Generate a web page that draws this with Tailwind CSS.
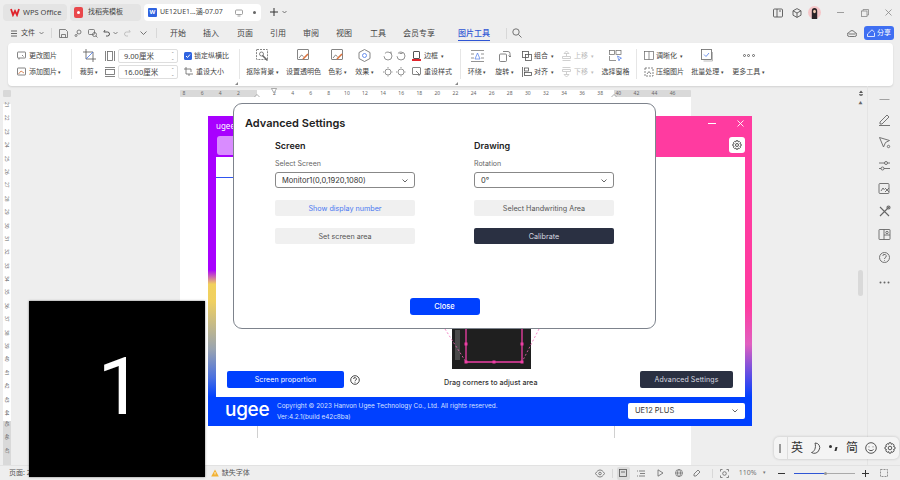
<!DOCTYPE html>
<html lang="zh-CN">
<head>
  <meta charset="UTF-8">
  <title>UE12 - WPS</title>
  <script src="https://cdn.jsdelivr.net/npm/@tailwindcss/browser@4"></script>
</head>
<body class="m-0">
<div class="relative w-[900px] h-[480px] overflow-hidden bg-[#eeeeee] flex flex-col text-[#444] font-['Noto_Sans','Noto_Sans_CJK_SC',sans-serif]">

  <!-- tabs -->
  <div class="h-[25px] pt-[4px] flex items-start shrink-0 text-[7.5px]">
    <div class="ml-[3px] w-[64px] h-[17px] rounded-[4px] bg-[#e4e4e4] flex items-center pl-[7px] gap-[3px]">
      <svg class="w-[10px] h-[9px]" viewBox="0 0 10 9" fill="none" stroke="#e0242c" stroke-width="1.8"><path d="M1 1l2 6 2-4 2 4 2-6"/></svg>
      <span>WPS Office</span>
    </div>
    <div class="ml-[3px] w-[71px] h-[17px] rounded-[4px] bg-[#e4e4e4] flex items-center pl-[4px] gap-[5px]">
      <span class="w-[9px] h-[11px] rounded-[2px] bg-[#e9474b] flex items-center justify-center"><span class="w-[3px] h-[3px] rounded-full bg-white"></span></span>
      <span class="text-[7px]">找稻壳模板</span>
    </div>
    <div class="ml-[3px] w-[117px] h-[17px] rounded-[4px] bg-white flex items-center pl-[4px]">
      <span class="w-[9px] h-[9px] rounded-[1px] bg-[#2f63e0] text-white text-[6px] leading-[9px] text-center font-bold">W</span>
      <span class="ml-[3px] text-[7px]">UE12UE1...涵-07.07</span>
      <svg class="ml-[12px] w-[8px] h-[8px]" viewBox="0 0 8 8" fill="none" stroke="#888" stroke-width=".8"><rect x=".5" y="1" width="7" height="4.5" rx="1"/><path d="M2.500 7h3"/></svg>
      <span class="ml-[10px] w-[3px] h-[3px] rounded-full bg-[#666]"></span>
    </div>
    <svg class="ml-[8px] mt-[3px] w-[10px] h-[10px]" viewBox="0 0 10 10" stroke="#333" stroke-width="1"><path d="M5 1v8M1 5h8"/></svg>
    <svg class="ml-[3px] mt-[6px] w-[5px] h-[4px]" viewBox="0 0 5 4" fill="none" stroke="#555" stroke-width=".8"><path d="M.5 1l2 2 2-2"/></svg>
    <div class="ml-auto flex items-center h-[17px]">
      <svg class="w-[10px] h-[10px]" viewBox="0 0 10 10" fill="none" stroke="#555" stroke-width=".9"><rect x=".5" y="1" width="9" height="8" rx="1"/><path d="M4 1v8M6 3h2"/></svg>
      <svg class="ml-[9px] w-[10px] h-[10px]" viewBox="0 0 10 10" fill="none" stroke="#555" stroke-width=".9"><path d="M5 .6l4 2.200v4.400l-4 2.200-4-2.200V2.800zM1 2.800l4 2.200 4-2.200M5 5v4.400"/></svg>
      <svg class="ml-[6px] w-[13px] h-[13px]" viewBox="0 0 13 13"><circle cx="6.500" cy="6.500" r="6.500" fill="#f5c6c8"/><path d="M3.800 13V5a2.700 3 0 015.400 0v8z" fill="#2a2226"/><ellipse cx="6.500" cy="5.500" rx="1.400" ry="1.800" fill="#f0c8b0"/></svg>
      <svg class="ml-[16px] w-[7px] h-[7px]" viewBox="0 0 7 7" stroke="#888" stroke-width=".8"><path d="M0 3.500h7"/></svg>
      <svg class="ml-[17px] w-[8px] h-[8px]" viewBox="0 0 8 8" fill="none" stroke="#888" stroke-width=".8"><rect x=".5" y="2" width="5.500" height="5.500"/><path d="M2 2V.5h5.500V6H6"/></svg>
      <svg class="ml-[16px] mr-[8px] w-[7px] h-[7px]" viewBox="0 0 7 7" stroke="#888" stroke-width=".8"><path d="M.5.5l6 6M6.500.5l-6 6"/></svg>
    </div>
  </div>

  <!-- menu row -->
  <div class="h-[16px] mb-[2px] flex items-center shrink-0 text-[7.5px]">
    <svg class="ml-[11px] w-[6px] h-[7px]" viewBox="0 0 6 7" stroke="#444" stroke-width=".8"><path d="M0 1h6M0 3.500h6M0 6h6"/></svg>
    <span class="ml-[4px] text-[7px]">文件</span>
    <svg class="ml-[4px] w-[5px] h-[4px]" viewBox="0 0 5 4" fill="none" stroke="#555" stroke-width=".7"><path d="M.5 1l2 2 2-2"/></svg>
    <span class="ml-[7px] w-px h-[10px] bg-[#d8d8d8]"></span>
    <svg class="ml-[7px] w-[9px] h-[9px]" viewBox="0 0 9 9" fill="none" stroke="#666" stroke-width=".8"><path d="M.5.5h6l2 2v6h-8zM2.500 8.500v-3h4v3"/></svg>
    <svg class="ml-[6px] w-[8px] h-[8px]" viewBox="0 0 8 8" fill="none" stroke="#666" stroke-width=".8"><circle cx="5" cy="3" r="2"/><circle cx="2" cy="6.500" r="1"/><path d="M3.500 4.500L2.800 5.500"/></svg>
    <svg class="ml-[6px] w-[10px] h-[9px]" viewBox="0 0 10 9" fill="none" stroke="#666" stroke-width=".8"><rect x=".5" y=".5" width="6" height="5" rx="1"/><circle cx="6.500" cy="5.500" r="2"/><path d="M8 7l1.500 1.500"/></svg>
    <svg class="ml-[5px] w-[8px] h-[8px]" viewBox="0 0 8 8" fill="none" stroke="#444" stroke-width=".9"><path d="M2 1L.8 3h3.700a2 2 0 010 4H3"/></svg>
    <svg class="ml-[2px] w-[5px] h-[4px]" viewBox="0 0 5 4" fill="none" stroke="#555" stroke-width=".7"><path d="M.5 1l2 2 2-2"/></svg>
    <svg class="ml-[5px] w-[8px] h-[8px]" viewBox="0 0 8 8" fill="none" stroke="#bbb" stroke-width=".9"><path d="M6 1l1.200 2H3.500a2 2 0 000 4H5"/></svg>
    <svg class="ml-[9px] w-[7px] h-[4px]" viewBox="0 0 7 4" fill="none" stroke="#555" stroke-width=".8"><path d="M.5.5l3 3 3-3"/></svg>
    <span class="ml-[9px] w-px h-[10px] bg-[#d8d8d8]"></span>
    <span class="ml-[13px] w-[16px] whitespace-nowrap text-[8px]">开始</span>
    <span class="ml-[17px] w-[16px] whitespace-nowrap text-[8px]">插入</span>
    <span class="ml-[18px] w-[16px] whitespace-nowrap text-[8px]">页面</span>
    <span class="ml-[17px] w-[16px] whitespace-nowrap text-[8px]">引用</span>
    <span class="ml-[17px] w-[16px] whitespace-nowrap text-[8px]">审阅</span>
    <span class="ml-[17px] w-[16px] whitespace-nowrap text-[8px]">视图</span>
    <span class="ml-[18px] w-[16px] whitespace-nowrap text-[8px]">工具</span>
    <span class="ml-[17px] w-[32px] whitespace-nowrap text-[8px]">会员专享</span>
    <span class="ml-[23px] w-[32px] h-[15px] leading-[14px] whitespace-nowrap text-[8px] text-[#2f55d4] font-medium border-b border-[#2f55d4]">图片工具</span>
    <span class="ml-[16px] mr-[5px] w-px h-[11px] bg-[#d8d8d8]"></span>
    <svg class="w-[10px] h-[10px]" viewBox="0 0 10 10" fill="none" stroke="#666" stroke-width=".9"><circle cx="4" cy="4" r="3.200"/><path d="M6.500 6.500l3 3"/></svg>
    <svg class="ml-auto w-[10px] h-[8px]" viewBox="0 0 10 8" fill="none" stroke="#555" stroke-width=".8"><path d="M2.500 7.500a2 2 0 01-.3-4 3 3 0 015.600 0 2 2 0 01-.3 4zM1.500 5h7"/></svg>
    <span class="ml-[7px] mr-[6px] w-[30px] h-[14px] rounded-[3px] bg-[#3f6ff2] text-white text-[7px] flex items-center justify-center gap-[2px]">
      <svg class="w-[8px] h-[8px]" viewBox="0 0 8 8" fill="none" stroke="#fff" stroke-width=".8"><path d="M.5 7.500h7V4M.5 7.500V5L5 .8l2.500 2.400"/></svg>分享
    </span>
  </div>

  <!-- ribbon -->
  <div class="relative ml-[8px] w-[885px] h-[43px] pb-[2px] rounded-[4px] bg-white shadow-[0_1px_2px_rgba(0,0,0,0.12)] flex items-center shrink-0 text-[7px] leading-[14px] whitespace-nowrap">
    <div class="ml-[9px] w-[47px] flex flex-col gap-[2px]">
      <div class="h-[14px] flex items-center gap-[3px]"><svg class="w-[9px] h-[9px]" viewBox="0 0 9 9" fill="none" stroke="#666" stroke-width=".8"><rect x=".5" y="1" width="8" height="6" rx=".5"/><path d="M2 7v1.500M5 4l1.500 1.500"/></svg>更改图片</div>
      <div class="h-[14px] flex items-center gap-[3px]"><svg class="w-[9px] h-[9px]" viewBox="0 0 9 9" fill="none" stroke="#666" stroke-width=".8"><rect x=".5" y="1" width="8" height="7" rx=".5"/><path d="M1.500 7l2.500-3 3 2" stroke="#d0703a"/></svg>添加图片 <span class="text-[5px] -ml-[2px]">▾</span></div>
    </div>
    <span class="ml-[7px] w-px h-[30px] bg-[#e6e6e6]"></span>
    <div class="ml-[7px] w-[20px] flex flex-col gap-[2px] items-center">
      <div class="h-[14px] flex items-center"><svg class="w-[13px] h-[13px]" viewBox="0 0 13 13" fill="none" stroke="#555" stroke-width=".8"><path d="M3 0v10h10M0 3h10v10"/><path d="M3 10L10 3" stroke="#4a78e8"/></svg></div>
      <div class="h-[14px]">裁剪<span class="text-[5px]"> ▾</span></div>
    </div>
    <div class="ml-[5px] w-[12px] flex flex-col gap-[2px] items-center">
      <div class="h-[14px] flex items-center"><svg class="w-[10px] h-[10px]" viewBox="0 0 10 10" fill="none" stroke="#666" stroke-width=".8"><path d="M.5 0v10M9.500 0v10"/><rect x="2.500" y=".5" width="5" height="9"/></svg></div>
      <div class="h-[14px] flex items-center"><svg class="w-[10px] h-[10px]" viewBox="0 0 10 10" fill="none" stroke="#666" stroke-width=".8"><path d="M0 .5h10M0 9.500h10"/><rect x=".5" y="2.500" width="9" height="5"/></svg></div>
    </div>
    <div class="ml-[2px] w-[60px] flex flex-col gap-[2px] text-[7.5px]">
      <div class="h-[14px] rounded-[2px] border border-[#dedede] flex items-center pl-[5px] pr-[3px] justify-between">9.00厘米<span class="text-[4px] leading-[5px] text-[#777] text-center">⌃<br>⌄</span></div>
      <div class="h-[14px] rounded-[2px] border border-[#dedede] flex items-center pl-[5px] pr-[3px] justify-between">16.00厘米<span class="text-[4px] leading-[5px] text-[#777] text-center">⌃<br>⌄</span></div>
    </div>
    <div class="ml-[6px] w-[46px] flex flex-col gap-[2px]">
      <div class="h-[14px] flex items-center gap-[2px]"><span class="w-[8px] h-[8px] rounded-[1.500px] bg-[#2f63e0] flex items-center justify-center"><svg class="w-[6px] h-[6px]" viewBox="0 0 6 6" fill="none" stroke="#fff" stroke-width="1"><path d="M1 3l1.500 1.500L5 1.500"/></svg></span>锁定纵横比</div>
      <div class="h-[14px] flex items-center gap-[3px]"><svg class="w-[9px] h-[9px]" viewBox="0 0 9 9" fill="none" stroke="#666" stroke-width=".8"><path d="M2 0v7h7M0 2h7v3M5 7v2"/></svg>重设大小</div>
    </div>
    <span class="ml-[9px] w-px h-[30px] bg-[#e6e6e6]"></span>
    <div class="ml-[6px] w-[33px] flex flex-col gap-[2px] items-center">
      <div class="h-[14px] flex items-center"><svg class="w-[13px] h-[13px]" viewBox="0 0 13 13" fill="none" stroke="#666" stroke-width=".8"><rect x=".5" y=".5" width="11" height="10" rx=".5" stroke-dasharray="2 1"/><circle cx="5.500" cy="5" r="2"/><path d="M6.500 6.500l5 5" stroke-width="1.600"/></svg></div>
      <div class="h-[14px]">抠除背景<span class="text-[5px]"> ▾</span></div>
    </div>
    <div class="ml-[7px] w-[35px] flex flex-col gap-[2px] items-center">
      <div class="h-[14px] flex items-center"><svg class="w-[13px] h-[13px]" viewBox="0 0 13 13" fill="none" stroke="#666" stroke-width=".8"><rect x=".5" y=".5" width="11" height="10" rx=".5"/><path d="M2 9l2.500-3 2 1.500"/><path d="M6 10l5-5" stroke="#d9713c" stroke-width="1.600"/></svg></div>
      <div class="h-[14px]">设置透明色</div>
    </div>
    <div class="ml-[7px] w-[19px] flex flex-col gap-[2px] items-center">
      <div class="h-[14px] flex items-center"><svg class="w-[13px] h-[13px]" viewBox="0 0 13 13" fill="none" stroke="#666" stroke-width=".8"><rect x=".5" y=".5" width="11" height="10" rx=".5"/><path d="M2 9l2.500-3 2 1.500"/><path d="M6 10l5-5" stroke="#d9713c" stroke-width="1.600"/></svg></div>
      <div class="h-[14px]">色彩<span class="text-[5px]"> ▾</span></div>
    </div>
    <div class="ml-[8px] w-[19px] flex flex-col gap-[2px] items-center">
      <div class="h-[14px] flex items-center"><svg class="w-[13px] h-[13px]" viewBox="0 0 13 13" fill="none" stroke="#666" stroke-width=".8"><path d="M6.500.5l5.500 3v6l-5.500 3-5.500-3v-6z"/><circle cx="6.500" cy="6.500" r="2" stroke="#4a78e8"/></svg></div>
      <div class="h-[14px]">效果<span class="text-[5px]"> ▾</span></div>
    </div>
    <div class="ml-[7px] w-[27px] grid grid-cols-2 gap-y-[2px] justify-items-center">
      <div class="h-[14px] flex items-center"><svg class="w-[10px] h-[10px]" viewBox="0 0 10 10" fill="none" stroke="#777" stroke-width=".8"><circle cx="5" cy="5" r="4" stroke-dasharray="12 3"/><path d="M8 .5v2"/></svg></div>
      <div class="h-[14px] flex items-center"><svg class="w-[10px] h-[10px]" viewBox="0 0 10 10" fill="none" stroke="#777" stroke-width=".8"><circle cx="5" cy="5" r="4" stroke-dasharray="12 3"/><path d="M3.500 2.500h3"/></svg></div>
      <div class="h-[14px] flex items-center"><svg class="w-[10px] h-[10px]" viewBox="0 0 10 10" fill="none" stroke="#777" stroke-width=".8"><circle cx="5" cy="5" r="3"/><path d="M5 0v1.500M5 8.500V10M0 5h1.500M8.500 5H10" stroke-dasharray="1 1"/></svg></div>
      <div class="h-[14px] flex items-center"><svg class="w-[10px] h-[10px]" viewBox="0 0 10 10" fill="none" stroke="#777" stroke-width=".8"><circle cx="5" cy="5" r="3"/><path d="M5 0v1.500M5 8.500V10M0 5h1.500M8.500 5H10" stroke-dasharray="1 1"/></svg></div>
    </div>
    <div class="ml-[4px] w-[41px] flex flex-col gap-[2px]">
      <div class="h-[14px] flex items-center gap-[3px]"><span class="w-[9px] h-[10px] flex flex-col"><span class="flex-1 border border-[#555] rounded-[1px] mx-[1px]"></span><span class="h-[2px] bg-[#e0242c]"></span></span>边框<span class="text-[5px]">▾</span></div>
      <div class="h-[14px] flex items-center gap-[3px]"><svg class="w-[9px] h-[9px]" viewBox="0 0 9 9" fill="none" stroke="#666" stroke-width=".8"><rect x=".5" y=".5" width="8" height="7" rx=".5"/><path d="M4 4l3 3v2"/></svg>重设样式</div>
    </div>
    <span class="ml-[7px] w-px h-[30px] bg-[#e6e6e6]"></span>
    <div class="ml-[6px] w-[20px] flex flex-col gap-[2px] items-center">
      <div class="h-[14px] flex items-center"><svg class="w-[13px] h-[12px]" viewBox="0 0 13 12" fill="none" stroke="#666" stroke-width=".7"><path d="M0 .5h13M0 11.500h13M0 4h3M0 8h3M10 4h3M10 8h3"/><path d="M4 9l2.500-6 2.500 6z" stroke="#4a78e8"/></svg></div>
      <div class="h-[14px]">环绕<span class="text-[5px]"> ▾</span></div>
    </div>
    <div class="ml-[8px] w-[19px] flex flex-col gap-[2px] items-center">
      <div class="h-[14px] flex items-center"><svg class="w-[12px] h-[13px]" viewBox="0 0 12 13" fill="none" stroke="#666" stroke-width=".8"><rect x=".5" y="5" width="7" height="7.500" rx="1"/><path d="M4 2.500h5a2 2 0 012 2V8M9.500 6.500L11 8l1-1.500"/></svg></div>
      <div class="h-[14px]">旋转<span class="text-[5px]"> ▾</span></div>
    </div>
    <div class="ml-[8px] w-[33px] flex flex-col gap-[2px]">
      <div class="h-[14px] flex items-center gap-[2px]"><svg class="w-[10px] h-[10px]" viewBox="0 0 10 10" fill="none" stroke="#555" stroke-width=".8"><rect x=".5" y=".5" width="6" height="6"/><rect x="3.500" y="3.500" width="6" height="6"/></svg>组合<span class="text-[5px] ml-[1px]">▾</span></div>
      <div class="h-[14px] flex items-center gap-[2px]"><svg class="w-[10px] h-[10px]" viewBox="0 0 10 10" fill="none" stroke="#555" stroke-width=".8"><path d="M.5 0v10"/><rect x="2.500" y="1" width="4" height="3"/><rect x="2.500" y="5.500" width="7" height="3"/></svg>对齐<span class="text-[5px] ml-[1px]">▾</span></div>
    </div>
    <div class="ml-[7px] w-[33px] flex flex-col gap-[2px] text-[#bcbcbc]">
      <div class="h-[14px] flex items-center gap-[3px]"><svg class="w-[9px] h-[10px]" viewBox="0 0 9 10" fill="none" stroke="#c4c4c4" stroke-width=".8"><path d="M4.500 0L2 2.500h5zM4.500 2.500V5M.5 5.500h8v2h-8zM.5 9.500h8"/></svg>上移<span class="text-[5px]">▾</span></div>
      <div class="h-[14px] flex items-center gap-[3px]"><svg class="w-[9px] h-[10px]" viewBox="0 0 9 10" fill="none" stroke="#c4c4c4" stroke-width=".8"><path d="M4.500 10L2 7.500h5zM4.500 7.500V5M.5 2.500h8v2h-8zM.5.500h8"/></svg>下移<span class="text-[5px]">▾</span></div>
    </div>
    <div class="ml-[6px] w-[29px] flex flex-col gap-[2px] items-center">
      <div class="h-[14px] flex items-center"><svg class="w-[13px] h-[12px]" viewBox="0 0 13 12" fill="none" stroke="#666" stroke-width=".7"><rect x=".5" y=".5" width="5" height="4"/><rect x="7" y=".5" width="5" height="4"/><path d="M.5 6v4.500H7"/><path d="M8.500 6l4 2.200-1.700.6-.8 2z" stroke="#4a78e8"/></svg></div>
      <div class="h-[14px]">选择窗格</div>
    </div>
    <span class="ml-[6px] w-px h-[30px] bg-[#e6e6e6]"></span>
    <div class="ml-[7px] w-[40px] flex flex-col gap-[2px]">
      <div class="h-[14px] flex items-center gap-[2px]"><svg class="w-[10px] h-[9px]" viewBox="0 0 10 9" fill="none" stroke="#666" stroke-width=".7"><rect x=".5" y=".5" width="9" height="8"/><path d="M5 .5v8"/></svg>调晰化<span class="text-[5px] ml-[1px]">▾</span></div>
      <div class="h-[14px] flex items-center gap-[2px]"><svg class="w-[10px] h-[10px]" viewBox="0 0 10 10" fill="none" stroke="#666" stroke-width=".8"><rect x="1" y="1" width="8" height="8" stroke-dasharray="2 1"/><path d="M3 7l2-2.500L7 7"/></svg>压缩图片</div>
    </div>
    <div class="ml-[7px] w-[33px] flex flex-col gap-[2px] items-center">
      <div class="h-[14px] flex items-center"><svg class="w-[13px] h-[13px]" viewBox="0 0 13 13" fill="none" stroke="#666" stroke-width=".8"><rect x=".5" y=".5" width="10" height="10"/><path d="M11.500 3v9h-9" stroke="#aaa"/><path d="M3 5.500l2 2 3-3.500" stroke="#4a78e8"/></svg></div>
      <div class="h-[14px]">批量处理<span class="text-[5px]"> ▾</span></div>
    </div>
    <div class="ml-[8px] w-[33px] flex flex-col gap-[2px] items-center">
      <div class="h-[14px] flex items-center gap-[1.500px]"><span class="w-[3px] h-[3px] rounded-full border border-[#666]"></span><span class="w-[3px] h-[3px] rounded-full border border-[#666]"></span><span class="w-[3px] h-[3px] rounded-full border border-[#666]"></span></div>
      <div class="h-[14px]">更多工具<span class="text-[5px]"> ▾</span></div>
    </div>
    <svg class="absolute left-[227px] bottom-[1px] w-[3px] h-[3px]" viewBox="0 0 3 3" fill="#888"><path d="M0 3L3 0v3z"/></svg>
    <svg class="absolute left-[447px] bottom-[1px] w-[3px] h-[3px]" viewBox="0 0 3 3" fill="#888"><path d="M0 3L3 0v3z"/></svg>
  </div>

  <!-- ruler row -->
  <div class="h-[10px] mt-[1px] flex items-start shrink-0">
    <span class="ml-[3px] mt-[3px] w-[8px] h-[7px] rounded-[1px] bg-[#d8d8d8]"></span>
    <div class="relative ml-[169px] mt-[3px] w-[511px] h-[7px] rounded-[1px] bg-[linear-gradient(to_right,#d9d9d9_15%,#fff_15%,#fff_85%,#d9d9d9_85%)] flex text-[5px] leading-[7px] text-[#666] [&>span]:w-[18.1px] [&>span]:text-center [&>span]:shrink-0">
      <span class="-ml-[5px]">8</span><span>6</span><span>4</span><span>2</span><span></span><span>2</span><span>4</span><span>6</span><span>8</span><span>10</span><span>12</span><span>14</span><span>16</span><span>18</span><span>20</span><span>22</span><span>24</span><span>26</span><span>28</span><span>30</span><span>32</span><span>34</span><span>36</span><span>38</span><span>40</span><span>42</span><span>44</span><span>46</span>
      <svg class="absolute left-[91px] -top-[2px] w-[6px] h-[6px]" viewBox="0 0 6 6" fill="#fff" stroke="#777" stroke-width=".6"><path d="M.5.5h5L3 5z"/></svg>
      <svg class="absolute left-[74px] top-[4px] w-[6px] h-[6px]" viewBox="0 0 6 6" fill="#fff" stroke="#777" stroke-width=".6"><path d="M3 .5L5.500 3v2.500h-5V3z"/></svg>
      <svg class="absolute left-[431px] top-[4px] w-[6px] h-[6px]" viewBox="0 0 6 6" fill="#fff" stroke="#777" stroke-width=".6"><path d="M3 .5L5.500 3v2.500h-5V3z"/></svg>
    </div>
  </div>

  <!-- document area -->
  <div class="relative flex-1 flex min-h-0">
    <div class="ml-[3px] w-[8px] flex flex-col">
      <div class="mt-[7px] h-[317px] bg-white flex flex-col text-[5px] text-[#666] items-center [&>span]:h-[13.4px] [&>span]:shrink-0 [&>span]:leading-[8px] [&>span]:[writing-mode:vertical-rl]">
        <span class="-mt-[2px]">21</span><span>22</span><span>23</span><span>24</span><span>25</span><span>26</span><span>27</span><span>28</span><span>29</span><span>30</span><span>31</span><span>32</span><span>33</span><span>34</span><span>35</span><span>36</span><span>37</span><span>38</span><span>39</span><span>40</span><span>41</span><span>42</span><span>43</span><span>44</span>
      </div>
      <div class="flex-1 bg-[#d9d9d9] flex flex-col text-[5px] text-[#666] items-center [&>span]:h-[13.4px] [&>span]:leading-[8px] [&>span]:[writing-mode:vertical-rl]">
        <span>45</span><span>46</span><span>47</span>
      </div>
    </div>
    <div class="ml-[169px] w-[511px] bg-white relative">
      <span class="absolute left-[77px] bottom-[27px] w-px h-[12px] bg-[#d0d0d0]"></span>
      <span class="absolute left-[434px] bottom-[27px] w-px h-[12px] bg-[#d0d0d0]"></span>
    </div>
    <!-- scrollbar -->
    <div class="relative ml-[165px] w-[9px] flex flex-col items-center">
      <svg class="mt-[-7px] w-[6px] h-[7px]" viewBox="0 0 6 7" fill="#555"><path d="M1 3l2-2.500L5 3zM1 4h4v.8H1zM1 6l2-1 2 1z"/></svg>
      <span class="mt-[5px] text-[4px] leading-[4px] text-[#666]">▲</span>
      <span class="mt-[164px] w-[5px] h-[26px] rounded-[3px] bg-[#d9d9d9]"></span>
    </div>
    <!-- right side bar -->
    <div class="ml-auto w-[33px] border-l border-[#e4e4e4] flex flex-col items-center -mt-[11px] [&>svg]:w-[13px] [&>svg]:h-[13px] [&>svg]:mt-[10px]">
      <svg class="!mt-[7px]" viewBox="0 0 13 13" stroke="#999" stroke-width=".9"><path d="M1.500 6.500h10"/></svg>
      <svg class="!mt-[7px]" viewBox="0 0 13 13" fill="none" stroke="#666" stroke-width=".9"><path d="M2 9l7-7 2 2-7 7H2zM1 12.500h11"/></svg>
      <svg viewBox="0 0 13 13" fill="none" stroke="#666" stroke-width=".9"><path d="M1.500 1.500l10 3-4 2-2 4.500z"/><circle cx="10.500" cy="10.500" r="1.200"/></svg>
      <svg viewBox="0 0 13 13" fill="none" stroke="#666" stroke-width=".9"><path d="M1 4h11M1 9.500h11"/><circle cx="8" cy="4" r="1.500" fill="#eee"/><circle cx="4.500" cy="9.500" r="1.500" fill="#eee"/></svg>
      <svg viewBox="0 0 13 13" fill="none" stroke="#666" stroke-width=".9"><rect x="1" y="1.500" width="10" height="10" rx="1"/><path d="M3 9l2-3 1.500 2"/><path d="M7 10l4-4M7 6l4 4"/></svg>
      <svg viewBox="0 0 13 13" fill="none" stroke="#666" stroke-width="1.100"><path d="M2 2l9 9M11 2l-9 9"/><circle cx="10.500" cy="2.500" r="1.500"/></svg>
      <svg viewBox="0 0 13 13" fill="none" stroke="#666" stroke-width=".9"><rect x="1" y="1.500" width="11" height="10" rx=".5"/><path d="M6 1.500v10M6 7h6"/><circle cx="9" cy="4.500" r="1.200"/></svg>
      <svg viewBox="0 0 13 13" fill="none" stroke="#666" stroke-width=".9"><circle cx="6.500" cy="6.500" r="5"/><path d="M4.800 5a1.700 1.700 0 113 1.200c-.7.500-1.300.8-1.300 1.800M6.500 9.300v.8"/></svg>
      <svg class="!mt-[12px]" viewBox="0 0 13 13" fill="#666"><circle cx="2.500" cy="6.500" r="1"/><circle cx="6.500" cy="6.500" r="1"/><circle cx="10.500" cy="6.500" r="1"/></svg>
    </div>
  </div>

  <!-- status bar -->
  <div class="h-[15px] shrink-0 flex items-center border-t border-[#e2e2e2] text-[7px]">
    <span class="ml-[9px] text-[#555]">页面: 2</span>
    <svg class="ml-[180px] w-[8px] h-[8px]" viewBox="0 0 8 8"><path d="M4 .5l3.800 7H.2z" fill="#f2b233"/><path d="M4 3v2.500" stroke="#fff" stroke-width=".8"/></svg>
    <span class="ml-[3px] text-[#555]">缺失字体</span>
    <svg class="ml-[345px] w-[10px] h-[9px]" viewBox="0 0 10 9" fill="none" stroke="#666" stroke-width=".8"><path d="M.5 4.500C2 2 3.500 1 5 1s3 1 4.500 3.500C8 7 6.500 8 5 8S2 7 .5 4.500z"/><circle cx="5" cy="4.500" r="1.300"/></svg>
    <span class="ml-[7px] w-px h-[9px] bg-[#d8d8d8]"></span>
    <span class="ml-[4px] w-[13px] h-[13px] rounded-[2px] bg-[#dcdcdc] flex items-center justify-center"><svg class="w-[8px] h-[8px]" viewBox="0 0 8 8" fill="none" stroke="#555" stroke-width=".8"><rect x=".5" y=".5" width="7" height="7"/><path d="M2 3h4"/></svg></span>
    <svg class="ml-[7px] w-[8px] h-[7px]" viewBox="0 0 8 7" stroke="#666" stroke-width=".8"><path d="M2 1h6M3 3.500h5M2 6h6M0 1h1M0 6h1"/></svg>
    <svg class="ml-[12px] w-[7px] h-[8px]" viewBox="0 0 7 8" fill="none" stroke="#666" stroke-width=".8"><path d="M1 .8l5 3.200-5 3.200z"/></svg>
    <svg class="ml-[11px] w-[8px] h-[8px]" viewBox="0 0 8 8" fill="none" stroke="#666" stroke-width=".7"><circle cx="4" cy="4" r="3.500"/><ellipse cx="4" cy="4" rx="1.500" ry="3.500"/><path d="M.5 4h7"/></svg>
    <svg class="ml-[10px] w-[8px] h-[8px]" viewBox="0 0 8 8" fill="none" stroke="#666" stroke-width=".8"><path d="M1 5l4-4 2 2-4 4H1z"/></svg>
    <span class="ml-[11px] w-px h-[9px] bg-[#d8d8d8]"></span>
    <svg class="ml-[7px] w-[9px] h-[9px]" viewBox="0 0 9 9" fill="none" stroke="#666" stroke-width=".8"><path d="M.5 2.500v-2h2M6.500.5h2v2M8.500 6.500v2h-2M2.500 8.500h-2v-2"/><circle cx="4.500" cy="4.500" r="1.800"/></svg>
    <span class="ml-[10px] text-[#777]">110%</span>
    <span class="ml-[6px] text-[5px] text-[#777]">▾</span>
    <span class="ml-[12px] w-[7px] h-px bg-[#333]"></span>
    <div class="ml-[9px] w-[61px] h-px bg-[#aaa] relative"><span class="absolute left-0 top-0 w-[31px] h-px bg-[#2f55d4]"></span><span class="absolute left-[30px] -top-[1px] w-[3px] h-[3px] rounded-full bg-[#999]"></span></div>
    <svg class="ml-[7px] w-[7px] h-[7px]" viewBox="0 0 7 7" stroke="#333" stroke-width="1"><path d="M3.500 0v7M0 3.500h7"/></svg>
    <svg class="ml-[11px] w-[8px] h-[8px]" viewBox="0 0 8 8" fill="none" stroke="#777" stroke-width=".8" stroke-dasharray="2 1"><rect x=".5" y=".5" width="7" height="7"/></svg>
  </div>

  <!-- ugee driver window -->
  <div class="absolute left-[208px] top-[116px] w-[544px] h-[310px] flex flex-col overflow-hidden bg-[#0040ff]">
    <div class="relative h-[41px] shrink-0 bg-linear-to-r from-[#a800ff] from-20% via-[#c83ad0] to-[#ff3ba0] to-80%">
      <span class="absolute left-[8px] top-[4px] text-[8px] text-white">ugee1</span>
      <span class="absolute left-[9px] top-[20px] w-[20px] h-[19px] rounded-[3px] bg-[#d98cff]"></span>
      <span class="absolute left-[500px] top-[7px] w-[8px] h-px bg-white"></span>
      <svg class="absolute left-[529px] top-[4px] w-[7px] h-[7px]" viewBox="0 0 7 7" stroke="#fff" stroke-width=".9"><path d="M.5.5l6 6M6.500.5l-6 6"/></svg>
      <span class="absolute left-[521px] top-[21px] w-[16px] h-[16px] rounded-[3px] bg-white flex items-center justify-center">
        <svg class="w-[10px] h-[10px]" viewBox="0 0 12 12" fill="none" stroke="#444" stroke-width="1.100"><circle cx="6" cy="6" r="1.800"/><path d="M5 .8h2l.4 1.500 1.400-.6 1.400 1.400-.7 1.400 1.500.5v2l-1.500.5.700 1.400-1.400 1.400-1.400-.7-.4 1.500H5l-.4-1.500-1.400.7-1.400-1.400.7-1.400-1.500-.5v-2l1.500-.5-.7-1.400 1.400-1.400 1.400.6z"/></svg>
      </span>
    </div>
    <div class="flex flex-1 min-h-0">
      <span class="w-[8px] shrink-0 bg-[linear-gradient(to_bottom,#a800ff_0%,#a800ff_47%,#f2d15c_53%,#f0d060_60%,#9aa4b0_80%,#4a70e0_92%,#0040ff_100%)]"></span>
      <div class="relative flex-1 bg-white flex flex-col">
        <span class="mt-[20px] w-[17px] h-px bg-[#2f55f0]"></span>
        <div class="mt-auto mb-[9px] h-[17px] flex items-center font-['Inter',sans-serif]">
          <span class="ml-[11px] w-[117px] h-[17px] pt-[1px] rounded-[2px] bg-[#0040ff] text-white text-[7px] tracking-[0.1px] flex items-center justify-center">Screen proportion</span>
          <svg class="ml-[6px] w-[10px] h-[10px]" viewBox="0 0 10 10" fill="none" stroke="#333" stroke-width=".9"><circle cx="5" cy="5" r="4.300"/><path d="M3.600 4a1.400 1.400 0 112.500.9c-.5.400-1.100.6-1.100 1.400M5 7v.7"/></svg>
          <span class="ml-[84px] mt-[8px] w-[95px] text-[7.2px] text-[#333] whitespace-nowrap font-medium">Drag corners to adjust area</span>
          <span class="ml-[101px] w-[93px] h-[17px] pt-[1px] rounded-[2px] bg-[#2a3042] text-[#d8dae0] text-[7px] tracking-[0.1px] flex items-center justify-center">Advanced Settings</span>
        </div>
        <!-- preview picture -->
        <svg class="absolute left-[224px] top-[163px] w-[105px] h-[58px]" viewBox="0 0 105 58" fill="none">
          <rect x="12" y="5" width="79" height="44" fill="#1f1f1f"/>
          <rect x="15" y="10" width="5" height="30" fill="#4a4a4a"/>
          <path d="M5 9L26 42M99 9L82 42" stroke="#f06ab8" stroke-width=".8" stroke-dasharray="2 2"/>
          <path d="M26 0V42H82V0" stroke="#ee3fa5" stroke-width="1.300"/>
          <path d="M24.500 22.500h3v3h-3zM80.500 22.500h3v3h-3zM24.500 40.500h3v3h-3zM52.500 40.500h3v3h-3zM80.500 40.500h3v3h-3z" fill="#ee3fa5"/>
        </svg>
      </div>
      <span class="w-[7px] shrink-0 bg-[linear-gradient(to_bottom,#ff3ba0_0%,#ff3ba0_62%,#e060c0_78%,#0040ff_100%)]"></span>
    </div>
    <div class="h-[29px] shrink-0 flex items-center text-white font-['Inter',sans-serif]">
      <span class="ml-[17px] w-[45px] text-[19px] leading-[19px] font-medium -mt-[5px] tracking-[-0.3px]">ugee</span>
      <div class="ml-[7px] text-[6.400px] leading-[11px] text-[#d8e0ff]">
        <div>Copyright © 2023 Hanvon Ugee Technology Co., Ltd. All rights reserved.</div>
        <div>Ver:4.2.1(build e42c8ba)</div>
      </div>
      <div class="ml-auto mr-[7px] w-[117px] h-[16px] rounded-[2px] bg-white text-[#333] text-[7.5px] flex items-center justify-between px-[7px] -mt-[1px]">UE12 PLUS
        <svg class="w-[6px] h-[4px]" viewBox="0 0 6 4" fill="none" stroke="#555" stroke-width=".9"><path d="M.5.5L3 3 5.500.5"/></svg>
      </div>
    </div>
  </div>

  <!-- advanced settings dialog -->
  <div class="absolute left-[233px] top-[103px] w-[423px] h-[226px] rounded-[9px] border border-[#7d838c] bg-white font-['Inter',sans-serif] flex flex-col">
    <h2 class="ml-[11px] mt-[12px] text-[11px] leading-[14px] font-semibold text-[#222]">Advanced Settings</h2>
    <div class="flex ml-[41px] mt-[10px]">
      <div class="w-[140px]">
        <div class="text-[9px] leading-[12px] font-semibold text-[#222]">Screen</div>
        <div class="mt-[7px] text-[7px] leading-[10px] text-[#666]">Select Screen</div>
        <div class="mt-[3px] h-[16px] pt-[1px] rounded-[3px] border border-[#888] text-[7.5px] text-[#333] flex items-center justify-between pl-[6px] pr-[6px]">Monitor1(0,0,1920,1080)
          <svg class="w-[6px] h-[4px]" viewBox="0 0 6 4" fill="none" stroke="#555" stroke-width=".9"><path d="M.5.5L3 3 5.500.5"/></svg>
        </div>
        <div class="mt-[12px] h-[16px] pt-[2px] rounded-[2px] bg-[#f0f0f0] text-[7.2px] text-[#4a78f0] flex items-center justify-center">Show display number</div>
        <div class="mt-[12px] h-[16px] pt-[2px] rounded-[2px] bg-[#f0f0f0] text-[7.2px] text-[#555] flex items-center justify-center">Set screen area</div>
      </div>
      <div class="ml-[59px] w-[140px]">
        <div class="text-[9px] leading-[12px] font-semibold text-[#222]">Drawing</div>
        <div class="mt-[7px] text-[7px] leading-[10px] text-[#666]">Rotation</div>
        <div class="mt-[3px] h-[16px] pt-[1px] rounded-[3px] border border-[#888] text-[7.5px] text-[#333] flex items-center justify-between pl-[6px] pr-[6px]">0°
          <svg class="w-[6px] h-[4px]" viewBox="0 0 6 4" fill="none" stroke="#555" stroke-width=".9"><path d="M.5.5L3 3 5.500.5"/></svg>
        </div>
        <div class="mt-[12px] h-[16px] pt-[2px] rounded-[2px] bg-[#f0f0f0] text-[7.2px] text-[#555] flex items-center justify-center">Select Handwriting Area</div>
        <div class="mt-[12px] h-[16px] pt-[2px] rounded-[2px] bg-[#2a3042] text-[7.2px] text-[#d8dae0] flex items-center justify-center">Calibrate</div>
      </div>
    </div>
    <div class="mt-auto mb-[13px] flex justify-center">
      <span class="w-[70px] h-[17px] rounded-[3px] bg-[#0040ff] text-white text-[7.5px] font-medium flex items-center justify-center">Close</span>
    </div>
  </div>

  <!-- display number window -->
  <div class="absolute left-[29px] top-[301px] w-[176px] h-[176px] pl-[6px] bg-black shadow-[0_0_2px_rgba(0,0,0,0.5)] text-white text-[80px] leading-[172px] text-center font-['Roboto',sans-serif]">1</div>

  <!-- IME bar -->
  <div class="absolute left-[774px] top-[437px] w-[125px] h-[22px] rounded-[5px] bg-[#f4f4f4] shadow-[0_0_3px_rgba(0,0,0,0.2)] flex items-center text-[12px] text-[#333]">
    <span class="ml-[5px] w-[2px] h-[9px] bg-[#999]"></span>
    <span class="ml-[6px] w-px h-[22px] bg-[#ddd]"></span>
    <span class="ml-[3px] w-[12px] leading-[22px]">英</span>
    <svg class="ml-[7px] w-[12px] h-[12px]" viewBox="0 0 12 12" fill="none" stroke="#444" stroke-width=".9"><path d="M5 1a4.500 4.500 0 014 7 5 5 0 01-7.500 2.500C4 10 6.500 6 5 1z"/></svg>
    <span class="ml-[7px] w-[3px] h-[3px] rounded-full bg-[#333] -mt-[4px]"></span>
    <span class="ml-[3px] w-[2px] h-[4px] bg-[#333] skew-x-[-15deg] mt-[2px]"></span>
    <span class="ml-[9px] w-[12px] leading-[22px]">简</span>
    <svg class="ml-[7px] w-[12px] h-[12px]" viewBox="0 0 12 12" fill="none" stroke="#444" stroke-width=".9"><circle cx="6" cy="6" r="5.300"/><path d="M3.500 7.500c1.300 1.500 3.700 1.500 5 0M4 4.500v.8M8 4.500v.8"/></svg>
    <svg class="ml-[7px] w-[12px] h-[12px]" viewBox="0 0 12 12" fill="none" stroke="#444" stroke-width=".9"><circle cx="6" cy="6" r="1.800"/><path d="M5 .8h2l.4 1.500 1.400-.6 1.400 1.400-.7 1.400 1.500.5v2l-1.500.5.700 1.400-1.400 1.400-1.400-.7-.4 1.500H5l-.4-1.500-1.400.7-1.400-1.400.7-1.400-1.500-.5v-2l1.500-.5-.7-1.400 1.400-1.400 1.400.6z"/></svg>
  </div>
</div>
</body>
</html>
